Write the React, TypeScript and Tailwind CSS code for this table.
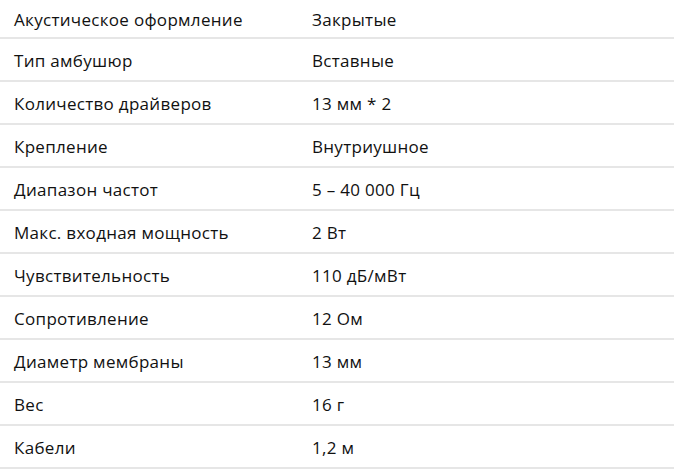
const SPECS = [
  ["Акустическое оформление", "Закрытые"],
  ["Тип амбушюр", "Вставные"],
  ["Количество драйверов", "13 мм * 2"],
  ["Крепление", "Внутриушное"],
  ["Диапазон частот", "5 – 40 000 Гц"],
  ["Макс. входная мощность", "2 Вт"],
  ["Чувствительность", "110 дБ/мВт"],
  ["Сопротивление", "12 Ом"],
  ["Диаметр мембраны", "13 мм"],
  ["Вес", "16 г"],
  ["Кабели", "1,2 м"],
];

export default function App() {
  return (
    <div className="h-[471px] w-[676px] overflow-hidden bg-white font-['Open_Sans',sans-serif] text-[17px] tracking-[0.3px] text-[#111]">
      <div className="w-[674px]">
        {SPECS.map(([label, value], i) => (
          <div
            key={label}
            className={`flex items-center border-b-2 border-[#e6e6e6] pt-[2px] ${
              i === 0 ? "h-[39px]" : "h-[43px]"
            }`}
          >
            <div className="w-[312px] shrink-0 pl-[14px]">{label}</div>
            <div>{value}</div>
          </div>
        ))}
      </div>
    </div>
  );
}
